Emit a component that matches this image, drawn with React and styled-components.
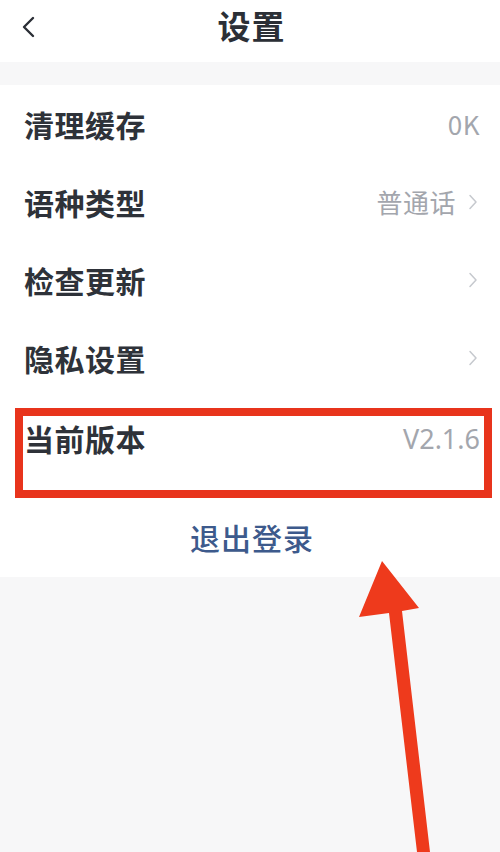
import React from 'react';
import styled, { createGlobalStyle } from 'styled-components';

const GlobalStyle = createGlobalStyle`
  html, body {
    margin: 0;
    padding: 0;
    background: #f7f7f8;
  }
  body {
    font-family: 'Noto Sans CJK SC', 'Noto Sans', sans-serif;
  }
`;

const rows = [
  { label: '清理缓存', value: '0K', arrow: false },
  { label: '语种类型', value: '普通话', arrow: true },
  { label: '检查更新', value: '', arrow: true },
  { label: '隐私设置', value: '', arrow: true },
];

const Chevron = () => (
  <svg width="12" height="16" viewBox="0 0 12 16" fill="none">
    <path d="M2 1.5l6 6.5-6 6.5" stroke="#c6c9ce" strokeWidth="1.5" strokeLinecap="round" strokeLinejoin="round" />
  </svg>
);

const App = () => {
  return (
    <Page>
      <GlobalStyle />
      <Header>
        <Back>
          <svg width="18" height="24" viewBox="0 0 18 24" fill="none">
            <path d="M14 3L5 12l9 9" stroke="#2b2f36" strokeWidth="2.4" strokeLinecap="round" strokeLinejoin="round" />
          </svg>
        </Back>
        <Title>设置</Title>
      </Header>
      <Card>
        {rows.map((r) => (
          <Row key={r.label}>
            <Label>{r.label}</Label>
            <Right>
              {r.value && <Value>{r.value}</Value>}
              {r.arrow && <Chevron />}
            </Right>
          </Row>
        ))}
        <Highlight>
          <Row $boxed>
            <Label>当前版本</Label>
            <Value $version>V2.1.6</Value>
          </Row>
        </Highlight>
        <Logout>退出登录</Logout>
      </Card>
      <Arrow width="500" height="852" viewBox="0 0 500 852">
        <polygon points="382,561 419,608 402,611 430,852 417,852 389,613 359,617" fill="#ee3a1c" />
      </Arrow>
    </Page>
  );
};

const Page = styled.div`
  position: relative;
  width: 500px;
  height: 852px;
  overflow: hidden;
  background: #f7f7f8;
`;

const Header = styled.header`
  position: relative;
  height: 62px;
  background: #ffffff;
  display: flex;
  align-items: center;
  justify-content: center;
`;

const Back = styled.div`
  position: absolute;
  left: 19px;
  top: 15px;
  display: flex;
`;

const Title = styled.h1`
  margin: 0 0 12px 3px;
  font-size: 33px;
  line-height: 1;
  font-weight: 600;
  color: #2b2f36;
  letter-spacing: 1px;
`;

const Card = styled.section`
  margin-top: 23px;
  background: #ffffff;
  display: flex;
  flex-direction: column;
`;

const Row = styled.div`
  height: ${(p) => (p.$boxed ? '44px' : '78px')};
  display: flex;
  align-items: center;
  justify-content: space-between;
  padding: ${(p) => (p.$boxed ? '0 4px 0 1px' : '0 20px 0 24px')};
  box-sizing: border-box;
`;

const Label = styled.span`
  font-size: 30px;
  font-weight: 600;
  color: #2e3239;
  letter-spacing: 0.5px;
`;

const Right = styled.div`
  display: flex;
  align-items: center;
  gap: 12px;
`;

const Value = styled.span`
  font-size: ${(p) => (p.$version ? '27px' : '26px')};
  color: #a3a6ad;
  font-family: ${(p) => (p.$version ? "'Noto Sans', sans-serif" : 'inherit')};
  letter-spacing: ${(p) => (p.$version ? '0' : '0.5px')};
  line-height: 1;
`;

const Highlight = styled.div`
  margin: 11px 8px 0 15px;
  border: 8px solid #e8341c;
  height: 90px;
  box-sizing: border-box;
`;

const Logout = styled.div`
  height: 79px;
  display: flex;
  align-items: center;
  justify-content: center;
  font-size: 30px;
  font-weight: 500;
  color: #3d5a8c;
  letter-spacing: 1px;
  padding-left: 4px;
  padding-bottom: 2px;
  box-sizing: border-box;
`;

const Arrow = styled.svg`
  position: absolute;
  left: 0;
  top: 0;
  pointer-events: none;
`;

export default App;
